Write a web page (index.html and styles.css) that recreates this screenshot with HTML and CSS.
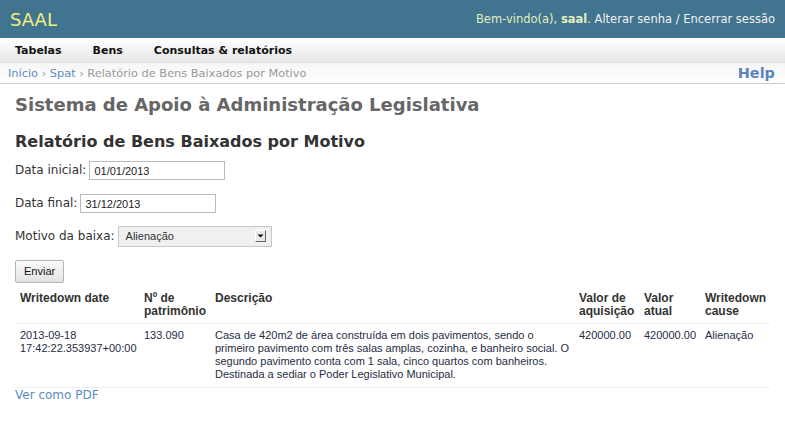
FILE: index.html
```html
<!DOCTYPE html>
<html>
<head>
<meta charset="utf-8">
<link rel="stylesheet" href="styles.css">
</head>
<body>
<div class="topbar">
  <span class="brand">SAAL</span>
  <span class="user"><span class="welcome">Bem-vindo(a), <b>saal</b>.</span> Alterar senha / Encerrar sessão</span>
</div>
<div class="nav">
  <span class="nav-item">Tabelas</span>
  <span class="nav-item">Bens</span>
  <span class="nav-item">Consultas &amp; relatórios</span>
</div>
<div class="crumbs">
  <span><a class="lnk">Início</a> <span class="sep">›</span> <a class="lnk">Spat</a> <span class="sep">›</span> <span class="cur">Relatório de Bens Baixados por Motivo</span></span>
  <span class="help">Help</span>
</div>
<div class="content">
  <h1 class="site-title">Sistema de Apoio à Administração Legislativa</h1>
  <h2 class="page-title">Relatório de Bens Baixados por Motivo</h2>
  <div class="field"><span class="label">Data inicial:</span><span class="input">01/01/2013</span></div>
  <div class="field"><span class="label">Data final:</span><span class="input">31/12/2013</span></div>
  <div class="field"><span class="label">Motivo da baixa:</span><span class="select"><span>Alienação</span><span class="arrow"><svg width="9" height="10" viewBox="0 0 9 10"><path d="M1.5 3.5h6l-3 3z" fill="#000"/></svg></span></span></div>
  <div class="btn">Enviar</div>
  <table class="report">
    <thead>
      <tr><th class="c1">Writedown date</th><th class="c2">Nº de patrimônio</th><th class="c3">Descrição</th><th class="c4">Valor de aquisição</th><th class="c5">Valor atual</th><th class="c6">Writedown cause</th></tr>
    </thead>
    <tbody>
      <tr><td>2013-09-18 17:42:22.353937+00:00</td><td>133.090</td><td class="desc">Casa de 420m2 de área construída em dois pavimentos, sendo o primeiro pavimento com três salas amplas, cozinha, e banheiro social. O segundo pavimento conta com 1 sala, cinco quartos com banheiros. Destinada a sediar o Poder Legislativo Municipal.</td><td>420000.00</td><td>420000.00</td><td>Alienação</td></tr>
    </tbody>
  </table>
  <a class="pdf">Ver como PDF</a>
</div>
</body>
</html>
```
FILE: styles.css
```css
* { box-sizing: border-box; }
body { margin: 0; font-family: "DejaVu Sans", sans-serif; color: #333; background: #fff; }
.topbar { height: 38px; background: #41748e; display: flex; align-items: center; justify-content: space-between; padding: 0 10px 0 10px; }
.brand { color: #f2ee80; font-size: 18px; }
.user { color: #f2f2f2; font-size: 11.5px; }
.welcome { color: #e4efc0; }
.nav { height: 25px; background: linear-gradient(#ffffff, #e6e6e6); display: flex; align-items: center; padding-left: 15px; border-bottom: 1px solid #ddd; }
.nav-item { font-size: 11px; font-weight: bold; color: #111; margin-right: 31px; }
.crumbs { height: 21px; display: flex; align-items: center; justify-content: space-between; padding: 0 10px 0 8px; font-size: 11.35px; border-bottom: 1px solid #ccc; background: linear-gradient(#f6f6f6, #fff); }
.lnk { color: #5b8cc2; }
.sep, .cur { color: #999; }
.help { font-size: 14.5px; font-weight: bold; color: #5a84bd; }
.content { padding: 0 15px; }
.site-title { font-size: 18px; font-weight: bold; color: #666; margin: 10px 0 0 0; line-height: 22px; }
.page-title { font-size: 16px; font-weight: bold; color: #333; margin: 15px 0 0 0; line-height: 22px; }
.field { display: flex; align-items: center; font-size: 12px; margin-top: 6px; height: 22px; }
.field + .field { margin-top: 11px; }
.label { margin-right: 3px; }
.input { display: inline-block; width: 136px; height: 19px; border: 1px solid #bbb; font-family: "Liberation Sans", sans-serif; font-size: 11px; padding: 3px 4px; color: #222; }
.select { display: inline-flex; align-items: center; justify-content: space-between; width: 154px; height: 21px; border: 1px solid #c8c8c8; background: #f0f0f0; font-family: "Liberation Sans", sans-serif; font-size: 11px; padding: 0 5px 0 7px; color: #333; }
.arrow { width: 11px; height: 12px; background: #e8e8e8; border: 1px solid; border-color: #fff #666 #666 #fff; display: flex; align-items: center; justify-content: center; }
.arrow svg { display: block; }
.btn { display: inline-block; margin-top: 13px; font-family: "Liberation Sans", sans-serif; font-size: 11px; padding: 4px 8px 5px; border: 1px solid #b5b5b5; border-radius: 2px; background: linear-gradient(#fbfbfb, #e3e3e3); color: #111; }
.report { width: 755px; table-layout: fixed; border-collapse: collapse; font-family: "Liberation Sans", sans-serif; font-size: 11px; margin-top: 4px; }
.report th { text-align: left; vertical-align: top; font-size: 12px; font-weight: bold; color: #333; padding: 5px 5px 5px 5px; line-height: 13px; border-bottom: 1px solid #eee; }
.report td { vertical-align: top; padding: 5px 5px 6px 5px; line-height: 13px; border-bottom: 1px solid #eee; color: #262d45; }
.report td.desc { padding-right: 0; }
.c1 { width: 124px; }
.c2 { width: 71px; }
.c3 { width: 364px; }
.c4 { width: 65px; }
.c5 { width: 61px; }
.c6 { width: 70px; }
.pdf { display: block; margin-top: 0; color: #5b8cc2; font-size: 12px; }
```
